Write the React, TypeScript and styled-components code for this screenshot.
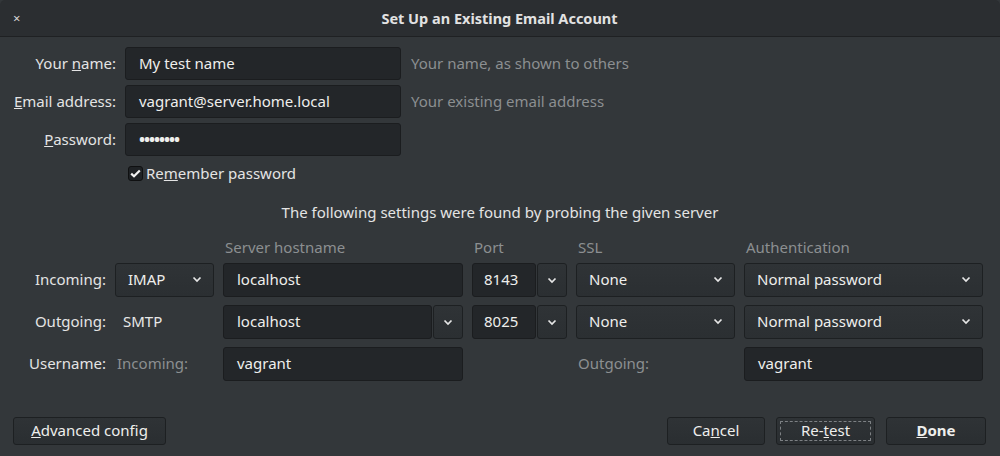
import React from "react";
import styled, { createGlobalStyle, css } from "styled-components";

const GlobalStyle = createGlobalStyle`
  html, body {
    margin: 0;
    padding: 0;
    background: #33373a;
  }
  body {
    font-family: "Noto Sans", "DejaVu Sans", sans-serif;
    font-size: 15px;
    color: #e8e8e7;
  }
`;

const Chevron = () => (
  <svg width="10" height="7" viewBox="0 0 10 7">
    <polyline points="1.5,1.5 5,5 8.5,1.5" fill="none" stroke="#e6e6e6" strokeWidth="1.7" />
  </svg>
);

export default function App() {
  return (
    <Dialog>
      <GlobalStyle />
      <TitleBar>
        <CloseButton>×</CloseButton>
        <Title>Set Up an Existing Email Account</Title>
      </TitleBar>

      <Body>
        <IdentityGrid>
          <Label>Your <u>n</u>ame:</Label>
          <TextField>My test name</TextField>
          <Hint>Your name, as shown to others</Hint>

          <Label><u>E</u>mail address:</Label>
          <TextField>vagrant@server.home.local</TextField>
          <Hint>Your existing email address</Hint>

          <Label><u>P</u>assword:</Label>
          <TextField $password>••••••••</TextField>
          <span />

          <span />
          <CheckRow>
            <CheckBox>
              <svg width="11" height="9" viewBox="0 0 11 9">
                <polyline points="1.2,4.6 4,7.3 9.8,1.4" fill="none" stroke="#f2f2f2" strokeWidth="2.2" />
              </svg>
            </CheckBox>
            <span>Re<u>m</u>ember password</span>
          </CheckRow>
        </IdentityGrid>

        <ProbeNote>The following settings were found by probing the given server</ProbeNote>

        <HeaderRow>
          <span />
          <span />
          <ColumnHead>Server hostname</ColumnHead>
          <ColumnHead>Port</ColumnHead>
          <ColumnHead>SSL</ColumnHead>
          <ColumnHead>Authentication</ColumnHead>
        </HeaderRow>

        <ServerRows>
          <RowLabel>Incoming:</RowLabel>
          <Select>IMAP<Chevron /></Select>
          <TextField>localhost</TextField>
          <Combo>
            <TextField $compact>8143</TextField>
            <DropButton><Chevron /></DropButton>
          </Combo>
          <Select>None<Chevron /></Select>
          <Select>Normal password<Chevron /></Select>

          <RowLabel>Outgoing:</RowLabel>
          <PlainValue>SMTP</PlainValue>
          <Combo>
            <TextField>localhost</TextField>
            <DropButton><Chevron /></DropButton>
          </Combo>
          <Combo>
            <TextField $compact>8025</TextField>
            <DropButton><Chevron /></DropButton>
          </Combo>
          <Select>None<Chevron /></Select>
          <Select>Normal password<Chevron /></Select>

          <RowLabel>Username:</RowLabel>
          <SubLabel>Incoming:</SubLabel>
          <TextField>vagrant</TextField>
          <span />
          <SubLabel>Outgoing:</SubLabel>
          <TextField>vagrant</TextField>
        </ServerRows>

        <Footer>
          <Button $width={153}><u>A</u>dvanced config</Button>
          <ButtonGroup>
            <Button $width={98}>Ca<u>n</u>cel</Button>
            <Button $width={99} $focused>Re-<u>t</u>est</Button>
            <Button $width={100} $bold><u>D</u>one</Button>
          </ButtonGroup>
        </Footer>
      </Body>
    </Dialog>
  );
}

const Dialog = styled.div`
  width: 1000px;
  height: 456px;
  display: flex;
  flex-direction: column;
  background: #33373a;
  overflow: hidden;
`;

const TitleBar = styled.div`
  height: 36px;
  flex: 0 0 36px;
  display: flex;
  align-items: center;
  justify-content: center;
  position: relative;
  background: #2b2e31;
  border-bottom: 1px solid #1f2123;
  border-radius: 5px 5px 0 0;
`;

const CloseButton = styled.span`
  position: absolute;
  left: 13px;
  top: 9px;
  font-size: 13px;
  color: #d6d6d6;
`;

const Title = styled.div`
  font-weight: bold;
  font-size: 14.5px;
  color: #e2e2e2;
  margin-left: -1px;
  margin-top: -1px;
`;

const Body = styled.div`
  flex: 1;
  display: flex;
  flex-direction: column;
  padding: 10px 0 11px;
`;

const IdentityGrid = styled.div`
  display: grid;
  grid-template-columns: 116px 276px auto;
  grid-template-rows: 33px 33px 33px auto;
  column-gap: 9px;
  row-gap: 5px;
  align-items: center;
`;

const Label = styled.div`
  text-align: right;
  color: #e4e4e4;
  white-space: nowrap;
  margin-top: -1px;
`;

const Hint = styled.div`
  color: #8c8f91;
  padding-left: 1px;
  white-space: nowrap;
  margin-top: -1px;
`;

const fieldBox = css`
  height: 100%;
  box-sizing: border-box;
  display: flex;
  align-items: center;
  border-radius: 3px;
  white-space: nowrap;
`;

const TextField = styled.div<{ $password?: boolean; $compact?: boolean }>`
  ${fieldBox};
  flex: 1;
  min-width: 0;
  padding-left: ${(p) => (p.$compact ? "11px" : "13px")};
  padding-bottom: 2px;
  background: #232629;
  border: 1px solid #1b1d1f;
  color: #eeeeec;
  letter-spacing: ${(p) => (p.$password ? "-1px" : "0")};
  font-size: ${(p) => (p.$password ? "16px" : "15px")};
  font-weight: ${(p) => (p.$password ? "bold" : "normal")};
`;

const CheckRow = styled.div`
  display: flex;
  align-items: center;
  gap: 3px;
  margin-left: 3px;
  margin-top: 3px;
  height: 18px;
  color: #e4e4e4;
`;

const CheckBox = styled.span`
  width: 15px;
  height: 15px;
  box-sizing: border-box;
  border: 1px solid #0f1011;
  border-radius: 3px;
  background: #1f2225;
  display: flex;
  align-items: center;
  justify-content: center;
`;

const ProbeNote = styled.div`
  text-align: center;
  line-height: 20px;
  margin-top: 20px;
  color: #e4e4e4;
`;

const serverColumns = css`
  display: grid;
  grid-template-columns: 106px 99px 240px 95px 159px 239px;
  column-gap: 9px;
`;

const HeaderRow = styled.div`
  ${serverColumns};
  margin-top: 15px;
  margin-bottom: 6px;
  line-height: 20px;
`;

const ColumnHead = styled.div`
  color: #8c8f91;
  padding-left: 2px;
`;

const ServerRows = styled.div`
  ${serverColumns};
  grid-auto-rows: 34px;
  row-gap: 8px;
  align-items: center;
`;

const RowLabel = styled.div`
  text-align: right;
  color: #e4e4e4;
  margin-top: -2px;
`;

const PlainValue = styled.div`
  padding-left: 8px;
  margin-top: -2px;
  color: #e8e8e7;
`;

const SubLabel = styled.div`
  padding-left: 2px;
  margin-top: -2px;
  color: #8c8f91;
`;

const Select = styled.div`
  ${fieldBox};
  justify-content: space-between;
  padding: 0 11px 2px 12px;
  background: linear-gradient(#2f3336, #2b2f32);
  border: 1px solid #1d2022;
  color: #eeeeec;
`;

const Combo = styled.div`
  height: 100%;
  display: flex;
  gap: 1px;
`;

const DropButton = styled.div`
  ${fieldBox};
  width: 30px;
  justify-content: center;
  background: linear-gradient(#2f3336, #2b2f32);
  border: 1px solid #1d2022;
`;

const Footer = styled.div`
  margin-top: auto;
  display: flex;
  justify-content: space-between;
  padding: 0 14px 0 13px;
`;

const ButtonGroup = styled.div`
  display: flex;
  gap: 11px;
`;

const Button = styled.div<{ $width: number; $focused?: boolean; $bold?: boolean }>`
  width: ${(p) => p.$width}px;
  height: 28px;
  box-sizing: border-box;
  display: flex;
  align-items: center;
  justify-content: center;
  padding-bottom: 2px;
  border: 1px solid #1d2022;
  border-radius: 3px;
  background: linear-gradient(#2f3336, #2a2e31);
  color: #eeeeec;
  font-weight: ${(p) => (p.$bold ? "bold" : "normal")};
  position: relative;
  ${(p) =>
    p.$focused &&
    css`
      &::after {
        content: "";
        position: absolute;
        inset: 3px;
        border: 1px dashed #7d8184;
        border-radius: 1px;
      }
    `}
`;
